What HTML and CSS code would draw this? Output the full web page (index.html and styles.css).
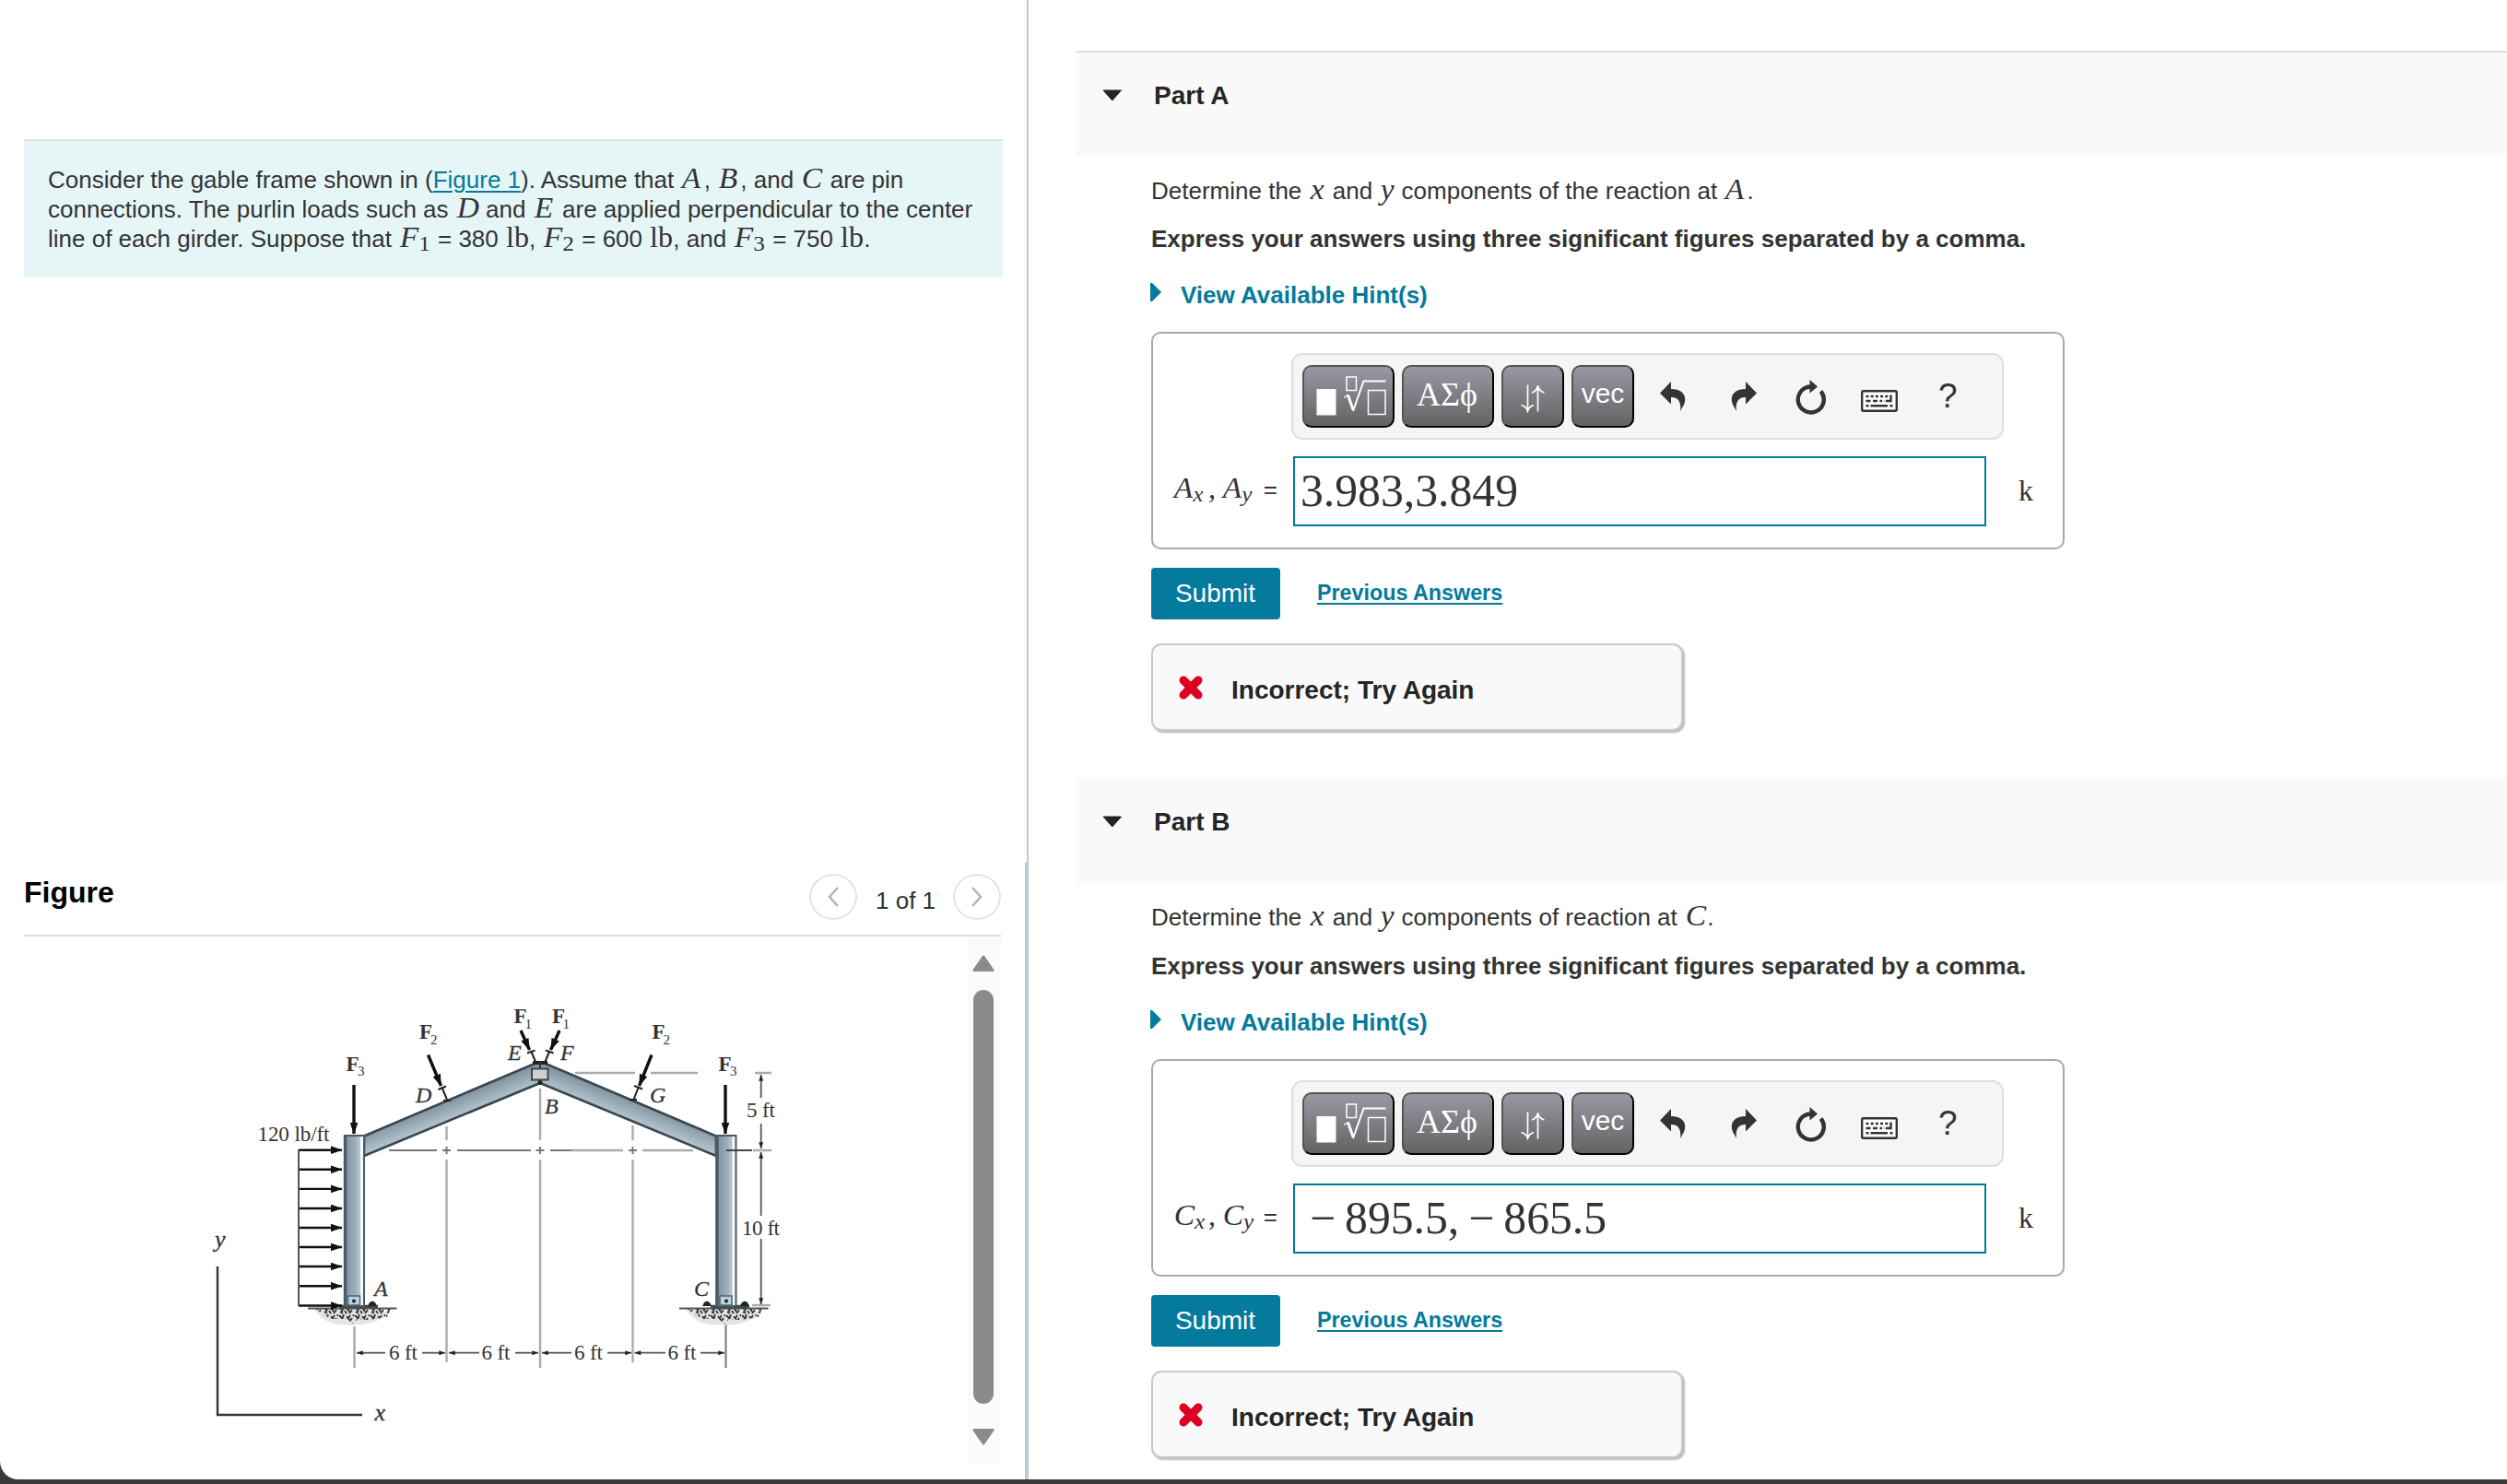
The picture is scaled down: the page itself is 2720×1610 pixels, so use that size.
FILE: index.html
```html
<!DOCTYPE html>
<html lang="en">
<head>
<meta charset="utf-8">
<title>Gable frame reactions</title>
<link rel="stylesheet" href="styles.css">
</head>
<body>
<svg class="sprite" aria-hidden="true">
  <defs>
    <symbol id="i-root" viewBox="0 0 96 64">
      <rect x="13.5" y="24" width="21" height="28.5" fill="#fff"/>
      <g fill="none" stroke="#fff" stroke-width="1.5">
        <rect x="46" y="11" width="10.5" height="14.5"/>
        <path d="M43 33.5l4.5-3"/>
        <path d="M47.5 30.5l5.5 16" stroke-width="3"/>
        <path d="M53 48L64.500 15.500H88.500" stroke-width="2"/>
        <rect x="69.500" y="25.500" width="18.500" height="26"/>
      </g>
    </symbol>
    <symbol id="i-swap" viewBox="0 0 28 32">
      <g fill="none" stroke="#fff" stroke-width="1.700">
        <path d="M8.500 1.500V29M1.500 23.500Q7 25 8.500 30Q10 25 15 23.500"/>
        <path d="M19.500 30.500V3M13 10Q18 8.500 19.500 2.500Q21 8.500 26.500 10"/>
      </g>
    </symbol>
    <symbol id="i-undo" viewBox="0 0 28 32">
      <path d="M0 12.500L12 0V8C24 8 30 15 26 25L22 32C23.500 23 20 16.500 12 17V24.500Z" fill="#333"/>
    </symbol>
    <symbol id="i-redo" viewBox="0 0 28 32">
      <path d="M28 12.500L16 0V8C4 8-2 15 2 25L6 32C4.500 23 8 16.500 16 17V24.500Z" fill="#333"/>
    </symbol>
    <symbol id="i-reset" viewBox="0 0 34 38">
      <path d="M17 7.500A14 14 0 1 0 28.500 12.500" fill="none" stroke="#333" stroke-width="4.400"/>
      <path d="M16.500 0L25 7.500L16.500 14.500Z" fill="#333"/>
    </symbol>
    <symbol id="i-keys" viewBox="0 0 40 24">
      <rect x="1.200" y="1.200" width="37.600" height="21.600" rx="1.500" fill="#fff" stroke="#333" stroke-width="2.400"/>
      <g stroke="#333" stroke-width="2.400" fill="none">
        <path d="M5.500 7H30" stroke-dasharray="3 2.200"/>
        <path d="M32.500 5.500V12H27"/>
        <path d="M5.500 12H10.500M13 12H26" stroke-dasharray="5 2.500 2.700 2.300 2.700 2.300"/>
        <path d="M5.500 17.200H8.500M10.500 17.200H29M31.500 17.200H34.500"/>
      </g>
    </symbol>
    <symbol id="i-wrong" viewBox="0 0 28 28">
      <path d="M6 6L22 22M22 6L6 22" stroke="#de0020" stroke-width="9" stroke-linecap="round" fill="none"/>
    </symbol>
    <symbol id="i-down" viewBox="0 0 22 13">
      <path d="M1 1H20.500L10.800 12Z" fill="#252525" stroke="#252525" stroke-width="1" stroke-linejoin="round"/>
    </symbol>
    <symbol id="i-right" viewBox="0 0 12 20">
      <path d="M0 0H2L12 10L2 20H0Z" fill="#047a9c"/>
    </symbol>
  </defs>
</svg>

<div class="window">
  <aside class="left">
    <section class="intro">
      Consider the gable frame shown in (<a href="#figure">Figure 1</a>). Assume that <i class="m w25">A</i>, <i class="m w25">B</i>, and <i class="m w25">C</i> are pin<br>
      connections. The purlin loads such as <i class="m w26">D</i> and <i class="m w25">E</i> are applied perpendicular to the center<br>
      line of each girder. Suppose that <i class="m w36">F<sub class="up">1</sub></i> = 380 <span class="m up w26">lb</span>, <i class="m w36">F<sub class="up">2</sub></i> = 600 <span class="m up w26">lb</span>, and <i class="m w36">F<sub class="up">3</sub></i> = 750 <span class="m up w26">lb</span>.
    </section>

    <section class="figure" id="figure">
      <header class="figure-head">
        <h2>Figure</h2>
        <nav class="pager">
          <span class="round"><svg width="16" height="24" viewBox="0 0 16 24"><path d="M13 2L4 12L13 22"/></svg></span>
          <span class="count">1 of 1</span>
          <span class="round"><svg width="16" height="24" viewBox="0 0 16 24"><path d="M3 2L12 12L3 22"/></svg></span>
        </nav>
      </header>
      <div class="figure-body">
        <svg class="frame" width="1023" height="572" viewBox="26 1016 1023 572">
          <defs>
            <linearGradient id="col"><stop offset="0" stop-color="#7d909c"/><stop offset=".5" stop-color="#98abb7"/><stop offset=".78" stop-color="#b3c5d0"/><stop offset=".84" stop-color="#fff"/><stop offset="1" stop-color="#e8eef2"/></linearGradient>
            <linearGradient id="beamL" gradientUnits="userSpaceOnUse" x1="486" y1="1192" x2="494" y2="1212"><stop offset="0" stop-color="#7c8f9b"/><stop offset="1" stop-color="#b0c3cf"/></linearGradient>
            <linearGradient id="beamR" gradientUnits="userSpaceOnUse" x1="687" y1="1192" x2="679" y2="1212"><stop offset="0" stop-color="#7c8f9b"/><stop offset="1" stop-color="#b0c3cf"/></linearGradient>
            <marker id="big" markerUnits="userSpaceOnUse" viewBox="0 0 13 9" markerWidth="13" markerHeight="9" refX="12.500" refY="4.500" orient="auto"><path d="M0 0L13 4.500L0 9Z" fill="#111"/></marker>
            <marker id="dim" markerUnits="userSpaceOnUse" viewBox="0 0 8 6" markerWidth="8" markerHeight="5" refX="8" refY="3" orient="auto-start-reverse"><path d="M0 0L8 3L0 6Z" fill="#222"/></marker>
            <pattern id="rock" width="17" height="9" patternUnits="userSpaceOnUse"><path d="M1 1l3 3M6 0l-2 6M9 2l3 4M13 1l-2 3M15 4l-3 4M2 6l3 2M7 5l2 3M16 0l1 2" stroke="#333" stroke-width="1.900" fill="none"/></pattern>
            <g id="ground">
              <path d="M-44 2C-38 14-22 22-8 20C6 22 30 18 40 6Z" fill="#e4e4e6"/>
              <path d="M-42 2L40 2L36 12L16 15L4 14L-1 19L-8 14L-24 14L-34 9Z" fill="url(#rock)"/>
              <path d="M-50 2.500H46.500" stroke="#555" stroke-width="1.800"/>
              <path d="M-16 0.500H26" stroke="#3c4950" stroke-width="3.500"/>
            </g>
          </defs>

          <g stroke="#aaa" stroke-width="2.400" fill="none">
            <path d="M484.500 1222V1237M484.500 1258V1478M586 1181V1237M586 1258V1484M686.500 1221V1237M686.500 1258V1478M384.500 1439V1484"/>
            <path d="M624 1164H689M706 1164H757M819 1164H837M619 1248H676M697 1248H752M817 1248H837M816 1416H836"/>
          </g>
          <g stroke="#777" stroke-width="2" fill="none">
            <path d="M422 1248H474M496 1248H576M597 1248H620M480 1248H489M484.500 1244V1252M581.500 1248H590.500M586 1244V1252M682 1248H691M686.500 1244V1252M787.500 1434V1484"/>
          </g>

          <path d="M395 1232.500L581 1153.500L591 1153.500L777 1232.500V1254L586 1175L395 1254Z" fill="#98abb7"/>
          <path d="M395 1232.500L581 1153.500H586V1175L395 1254Z" fill="url(#beamL)"/>
          <path d="M777 1232.500L591 1153.500H586V1175L777 1254Z" fill="url(#beamR)"/>
          <path d="M395 1232.500L581 1153.500H591L777 1232.500V1254L586 1175L395 1254Z" fill="none" stroke="#3a474f" stroke-width="2.600"/>
          <path d="M578 1153H594" stroke="#222" stroke-width="4"/>
          <path d="M586 1153V1160" stroke="#333" stroke-width="2"/>
          <rect x="577" y="1159.500" width="17.500" height="12" fill="#d0d0d0" stroke="#444" stroke-width="2"/>
          <circle cx="586" cy="1174.500" r="2.500" fill="#222"/>

          <use href="#ground" x="384" y="1417"/>
          <use href="#ground" x="787" y="1417"/>
          <rect x="374" y="1232" width="21" height="185" fill="url(#col)" stroke="#4a5963" stroke-width="2"/>
          <rect x="777.500" y="1232" width="21" height="185" fill="url(#col)" stroke="#4a5963" stroke-width="2"/>
          <path d="M374.500 1232V1417M778 1232V1417" stroke="#4a5963" stroke-width="3.400"/>
          <rect x="377.500" y="1406" width="13" height="10" fill="#b5d3e3" stroke="#52636e" stroke-width="1.500"/>
          <rect x="781" y="1406" width="13" height="10" fill="#b5d3e3" stroke="#52636e" stroke-width="1.500"/>
          <circle cx="384" cy="1411.500" r="2" fill="#222"/>
          <circle cx="788" cy="1411.500" r="2" fill="#222"/>
          <path d="M399 1417L401 1413L404 1411.500L407 1413L409 1417ZM762 1417L764 1413L767 1411.500L770 1413L772 1417ZM803 1417L805 1413L808 1411.500L811 1413L813 1417Z" fill="#222"/>
          <path d="M788 1248H816" stroke="#444" stroke-width="2"/>

          <g stroke="#111" stroke-width="2.400" fill="none">
            <path d="M324 1247.700H371" marker-end="url(#big)"/><path d="M324 1268.800H371" marker-end="url(#big)"/><path d="M324 1289.900H371" marker-end="url(#big)"/><path d="M324 1311H371" marker-end="url(#big)"/><path d="M324 1332H371" marker-end="url(#big)"/><path d="M324 1353H371" marker-end="url(#big)"/><path d="M324 1374H371" marker-end="url(#big)"/><path d="M324 1395.200H371" marker-end="url(#big)"/><path d="M324 1416.500H371" marker-end="url(#big)"/>
          </g>
          <path d="M324 1247V1417" stroke="#555" stroke-width="2"/>
          <g stroke="#111" stroke-width="3.400" fill="none">
            <path d="M384 1177V1230" marker-end="url(#big)"/><path d="M787 1177V1230" marker-end="url(#big)"/>
            <path d="M464.500 1144.500L478.500 1178" marker-end="url(#big)"/><path d="M707 1144.500L693.500 1178" marker-end="url(#big)"/>
            <path d="M565 1118L574.500 1139" marker-end="url(#big)"/><path d="M607 1118L597.500 1139" marker-end="url(#big)"/>
          </g>
          <g stroke="#222" stroke-width="2" fill="none">
            <path d="M475.500 1182L484 1178.500M480 1181L485 1193M481 1194H489"/>
            <path d="M688 1178L697 1181.500M692.500 1180L687.500 1193M683 1193H691"/>
            <path d="M572 1142.500L580.500 1139.500M576.500 1141L581.500 1153M592 1139.500L600.500 1142.500M596 1141L591 1153"/>
          </g>

          <g stroke="#555" stroke-width="1.800" fill="none">
            <path d="M825.700 1191V1166" marker-end="url(#dim)"/><path d="M825.700 1219V1246" marker-end="url(#dim)"/>
            <path d="M825.700 1319V1250" marker-end="url(#dim)"/><path d="M825.700 1344V1415" marker-end="url(#dim)"/>
            <path d="M418 1467.700H387" marker-end="url(#dim)"/><path d="M458 1467.700H483" marker-end="url(#dim)"/>
            <path d="M520 1467.700H487" marker-end="url(#dim)"/><path d="M559 1467.700H584" marker-end="url(#dim)"/>
            <path d="M620 1467.700H588" marker-end="url(#dim)"/><path d="M659 1467.700H685" marker-end="url(#dim)"/>
            <path d="M722 1467.700H688.500" marker-end="url(#dim)"/><path d="M760 1467.700H786" marker-end="url(#dim)"/>
          </g>
          <path d="M236 1374V1535H393" fill="none" stroke="#333" stroke-width="2.400"/>

          <g class="dims">
            <text x="279.500" y="1237.500" textLength="78">120 lb/ft</text>
            <text x="810" y="1211.500" textLength="31">5 ft</text>
            <text x="805" y="1340" textLength="41">10 ft</text>
            <text x="422" y="1474.500" textLength="31">6 ft</text><text x="522.500" y="1474.500" textLength="31">6 ft</text>
            <text x="623" y="1474.500" textLength="31">6 ft</text><text x="724.500" y="1474.500" textLength="31">6 ft</text>
          </g>
          <g class="force">
            <text x="375.500" y="1161.500">F</text><text x="455" y="1127">F</text><text x="557.500" y="1110">F</text><text x="599" y="1110">F</text><text x="707.500" y="1127">F</text><text x="779.500" y="1161.500">F</text>
          </g>
          <g class="force-sub">
            <text x="388" y="1167">3</text><text x="467" y="1133">2</text><text x="569.500" y="1116">1</text><text x="610.500" y="1116">1</text><text x="719.500" y="1133">2</text><text x="792" y="1167">3</text>
          </g>
          <g class="points">
            <text x="406" y="1406">A</text><text x="591" y="1207.500">B</text><text x="753" y="1405.500">C</text><text x="451" y="1195.500">D</text><text x="551" y="1150">E</text><text x="608" y="1150">F</text><text x="705" y="1195.500">G</text>
            <text class="axis" x="233" y="1353">y</text><text class="axis" x="406.500" y="1541">x</text>
          </g>
        </svg>
        <div class="scroll">
          <svg width="24" height="18" viewBox="0 0 24 18"><path d="M12 2L22 16.500H2Z"/></svg>
          <div class="thumb"></div>
          <svg width="24" height="18" viewBox="0 0 24 18"><path d="M12 16L22 1.500H2Z"/></svg>
        </div>
      </div>
    </section>
  </aside>

  <div class="divider"><div class="divider-top"></div><div class="divider-low"></div></div>

  <main class="right">
    <section class="part part-a">
      <header class="part-head"><svg width="22" height="13"><use href="#i-down"/></svg><h3>Part A</h3></header>
      <div class="part-body">
        <p>Determine the <i class="m w19">x</i> and <i class="m w17">y</i> components of the reaction at <i class="m w25">A</i>.</p>
        <p class="how">Express your answers using three significant figures separated by a comma.</p>
        <p class="hint"><svg width="12" height="20"><use href="#i-right"/></svg>View Available Hint(s)</p>
        <div class="answer">
          <div class="toolbar">
            <button class="wide"><svg width="96" height="64"><use href="#i-root"/></svg></button>
            <button class="wide greek">ΑΣϕ</button>
            <button><svg class="swap" width="28" height="32"><use href="#i-swap"/></svg></button>
            <button class="vec">vec</button>
            <svg class="undo" width="28" height="32"><use href="#i-undo"/></svg>
            <svg class="redo" width="28" height="32"><use href="#i-redo"/></svg>
            <svg class="reset" width="34" height="38"><use href="#i-reset"/></svg>
            <svg class="keys" width="40" height="24"><use href="#i-keys"/></svg>
            <span class="help">?</span>
          </div>
          <div class="label"><i class="m w38">A<sub>x</sub></i><span class="m up w15">,</span><i class="m w46">A<sub>y</sub></i>=</div>
          <div class="field">3.983,3.849</div>
          <div class="unit">k</div>
        </div>
        <div class="actions"><button class="submit">Submit</button><a href="#prev">Previous Answers</a></div>
        <div class="feedback"><svg width="28" height="28"><use href="#i-wrong"/></svg>Incorrect; Try Again</div>
      </div>
    </section>

    <section class="part part-b">
      <header class="part-head"><svg width="22" height="13"><use href="#i-down"/></svg><h3>Part B</h3></header>
      <div class="part-body">
        <p>Determine the <i class="m w19">x</i> and <i class="m w17">y</i> components of reaction at <i class="m w25">C</i>.</p>
        <p class="how">Express your answers using three significant figures separated by a comma.</p>
        <p class="hint"><svg width="12" height="20"><use href="#i-right"/></svg>View Available Hint(s)</p>
        <div class="answer">
          <div class="toolbar">
            <button class="wide"><svg width="96" height="64"><use href="#i-root"/></svg></button>
            <button class="wide greek">ΑΣϕ</button>
            <button><svg class="swap" width="28" height="32"><use href="#i-swap"/></svg></button>
            <button class="vec">vec</button>
            <svg class="undo" width="28" height="32"><use href="#i-undo"/></svg>
            <svg class="redo" width="28" height="32"><use href="#i-redo"/></svg>
            <svg class="reset" width="34" height="38"><use href="#i-reset"/></svg>
            <svg class="keys" width="40" height="24"><use href="#i-keys"/></svg>
            <span class="help">?</span>
          </div>
          <div class="label"><i class="m w38">C<sub>x</sub></i><span class="m up w15">,</span><i class="m w46">C<sub>y</sub></i>=</div>
          <div class="field"><span class="minus">−</span>895.5,<span class="minus">−</span>865.5</div>
          <div class="unit">k</div>
        </div>
        <div class="actions"><button class="submit">Submit</button><a href="#prev">Previous Answers</a></div>
        <div class="feedback"><svg width="28" height="28"><use href="#i-wrong"/></svg>Incorrect; Try Again</div>
      </div>
    </section>
  </main>
</div>
</body>
</html>
```
FILE: styles.css
```css
* { box-sizing: border-box; }

body {
  margin: 0;
  width: 2720px;
  height: 1610px;
  overflow: hidden;
  background: #3a3a3a;
  color: #333;
  font: 26px/32px "Liberation Sans", Arial, sans-serif;
}

svg { display: block; flex: none; }
.sprite { width: 0; height: 0; position: absolute; }

.window {
  display: flex;
  height: 1605px;
  overflow: hidden;
  background: #fff;
  border-bottom-left-radius: 20px;
}

/* Maths set inline with the running text */
.m {
  display: inline-block;
  padding-left: 1.5px;
  font: italic 30.5px/20px "Liberation Serif", "Times New Roman", serif;
  text-align: left;
  white-space: nowrap;
  transform: scaleX(1.1);
  transform-origin: left;
}
.up { font-style: normal; }
.m.up { transform: scaleX(1.05); padding-left: 1px; }
.m sub { font-size: 23px; line-height: 0; vertical-align: -4px; }
.w15 { width: 15px; }
.w17 { width: 17px; }
.w19 { width: 19px; }
.w25 { width: 25.2px; }
.w26 { width: 26px; }
.w36 { width: 35.6px; }
.w38 { width: 38px; }
.w46 { width: 46px; }

/* Left column */
.left { width: 1112px; flex: none; padding: 151px 24px 0 26px; display: flex; flex-direction: column; }

.intro {
  height: 150px;
  padding: 26px 0 0 26px;
  border-top: 2px solid #dbe0e0;
  background: #e6f6f7;
  white-space: nowrap;
}
.intro a { color: #047a9c; text-underline-offset: 3px; text-decoration-thickness: 2px; }

.figure { margin-top: auto; padding-bottom: 17px; width: 1060px; }
.figure-head {
  display: flex;
  justify-content: space-between;
  height: 69px;
  border-bottom: 2px solid #dcdedf;
}
.figure-head h2 { margin: 3px 0 0; font-size: 32px; line-height: 36px; color: #000; }
.pager { display: flex; align-items: flex-start; }
.round {
  width: 52px;
  height: 50px;
  margin-top: 1px;
  border: 2px solid #e4e4e4;
  border-radius: 50%;
  display: flex;
  align-items: center;
  justify-content: center;
}
.round path { fill: none; stroke: #b5b5b5; stroke-width: 2.5; }
.count { width: 104px; padding: 14px 0 0 20px; }

.figure-body { display: flex; height: 572px; }
.scroll {
  width: 37px;
  padding: 20px 0 20px 6px;
  background: #fbfbfb;
  display: flex;
  flex-direction: column;
}
.scroll path { fill: #8b8b8b; stroke: #8b8b8b; stroke-width: 3; stroke-linejoin: round; }
.thumb { width: 22px; height: 450px; margin: 20px 0 27px 1px; border-radius: 11px; background: #8b8b8b; }

.frame text { font-family: "Liberation Serif", "Times New Roman", serif; fill: #333; }
.dims text { font-size: 23px; }
.force text { font-size: 23px; font-weight: bold; }
.force-sub text { font-size: 15px; }
.points text { font-size: 24px; font-style: italic; stroke: #333; stroke-width: 0.3px; }
.points .axis { font-size: 26px; }

.divider { width: 4px; flex: none; display: flex; flex-direction: column; }
.divider-top { height: 936px; width: 2px; margin-left: 2px; background: #b8cbdc; }
.divider-low { flex: 1; background: #b8cbdc; }

/* Right column */
.right { flex: 1; padding: 55px 0 0 52px; }

.part-head {
  height: 113px;
  padding: 40px 0 0 28px;
  background: #f9f9f9;
  display: flex;
  align-items: flex-start;
}
.part-head h3 { margin: -9px 0 0 34px; font-size: 28px; line-height: 32px; color: #252525; }
.part-a .part-head { height: 115px; border-top: 2px solid #dedfde; }

.part-body { padding: 21px 0 52px 81px; }
.part-body p { margin: 0; white-space: nowrap; }
.part-body .how { margin-top: 20px; font-weight: bold; }
.part-b .how { margin-top: 21px; }
.part-body .hint { margin-top: 29px; font-weight: bold; color: #047a9c; display: flex; }
.hint svg { margin: 3px 21px 0 -1px; }

.answer {
  margin-top: 24px;
  width: 991px;
  height: 236px;
  padding-top: 21px;
  border: 2px solid #a9a9a9;
  border-radius: 10px;
  display: grid;
  grid-template-columns: 152px 752px 1fr;
  grid-template-rows: 94px 76px;
  row-gap: 18px;
}
.toolbar {
  grid-column: 2 / 4;
  width: 773px;
  margin-left: -2px;
  padding: 11px 0 0 10px;
  border: 2px solid #dedede;
  border-radius: 12px;
  background: #f5f5f5;
  display: flex;
  align-items: flex-start;
}
.toolbar button {
  width: 68px;
  height: 68px;
  margin: 0 8px 0 0;
  padding: 0;
  flex: none;
  border: 2px solid;
  border-color: #555 #000 #000 #555;
  border-radius: 10px;
  background: linear-gradient(#9a97a3, #636363);
  color: #fff;
  display: flex;
  justify-content: center;
}
.toolbar .wide { width: 100px; }
.toolbar .greek { padding-right: 2px; font: 36px/60px "Liberation Serif", "Times New Roman", serif; }
.toolbar .vec { font: 30px/58px "Liberation Sans", Arial, sans-serif; }
.swap { margin-top: 18px; }
.undo { margin: 18px 0 0 20px; }
.redo { margin: 18px 0 0 49px; }
.reset { margin: 16px 0 0 41px; }
.keys { margin: 27px 0 0 38px; }
.help { margin: 18px 0 0 44px; font-size: 37px; line-height: 32px; }

.label { padding: 20px 17px 0 0; text-align: right; white-space: nowrap; }
.field {
  padding-left: 6px;
  border: 2px solid #047a9c;
  font: 49.7px/71px "Liberation Serif", "Times New Roman", serif;
}
.minus { margin: 0 10px; }
.unit { padding: 21px 0 0 35px; font: 32px/32px "Liberation Serif", "Times New Roman", serif; }

.actions { margin-top: 20px; display: flex; }
.submit {
  width: 140px;
  height: 56px;
  padding: 0 1px 0 0;
  border: 0;
  border-radius: 4px;
  background: #047a9c;
  color: #fff;
  font: 28px/52px "Liberation Sans", Arial, sans-serif;
}
.actions a {
  margin: 11px 0 0 40px;
  font-size: 23.3px;
  font-weight: bold;
  color: #047a9c;
  text-underline-offset: 3px;
  text-decoration-thickness: 2px;
}
.feedback {
  margin-top: 26px;
  width: 577px;
  height: 95px;
  padding: 6px 0 0 27px;
  border: 2px solid #c8c8c8;
  border-radius: 11px;
  background: #f9f9f9;
  box-shadow: 2px 2px 2px #bbb;
  display: flex;
  align-items: center;
  font-size: 28px;
  font-weight: bold;
  color: #252525;
}
.feedback svg { margin: -5px 30px 0 0; }
```
